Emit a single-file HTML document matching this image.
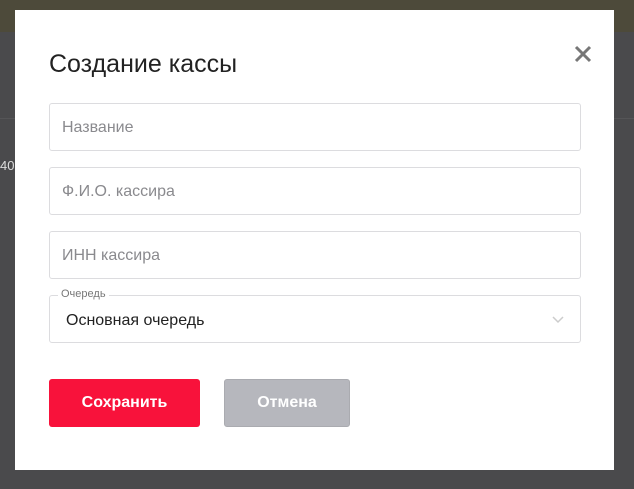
<!DOCTYPE html>
<html><head><meta charset="utf-8"><style>
*{box-sizing:border-box;margin:0;padding:0}
body{width:634px;height:489px;overflow:hidden;background:#4a4a4c;font-family:"Liberation Sans",sans-serif;position:relative}
.top{position:absolute;left:0;top:0;width:634px;height:32px;background:#4d4a3a}
.line{position:absolute;left:0;width:634px;height:1px;background:#555557}
.modal{position:absolute;left:15px;top:10px;width:599px;height:460px;background:#fff}
h1{position:absolute;left:34px;top:40px;font-size:25px;font-weight:normal;color:#222}
.x{position:absolute;left:558px;top:34px;width:20px;height:20px}
.f{position:absolute;left:34px;width:532px;height:48px;border:1px solid #dcdcdf;border-radius:3px;font-size:16px;color:#8a8a8e;padding:15px 12px}
.lbl{position:absolute;left:8px;top:-8px;background:#fff;padding:0 3px;font-size:11px;color:#777}
.btn{position:absolute;top:369px;height:48px;border-radius:3px;color:#fff;font-weight:bold;font-size:16px;text-align:center;line-height:48px}
</style></head><body>
<div class="top"></div>
<div class="line" style="top:118px"></div>
<div style="position:absolute;left:0;top:158px;color:#ddd;font-size:13px">40</div>
<div class="modal">
<h1>Создание кассы</h1>
<svg class="x" viewBox="0 0 20 20"><path d="M3 3L17 17M17 3L3 17" stroke="#777" stroke-width="3"/></svg>
<div class="f" style="top:93px">Название</div>
<div class="f" style="top:157px">Ф.И.О. кассира</div>
<div class="f" style="top:221px">ИНН кассира</div>
<div class="f" style="top:285px;color:#222;padding-top:16px;padding-left:16px"><span class="lbl">Очередь</span>Основная очередь
<svg style="position:absolute;right:16px;top:20px" width="12" height="8" viewBox="0 0 12 8"><path d="M1 1L6 6L11 1" stroke="#ccc" stroke-width="1.5" fill="none"/></svg></div>
<div class="btn" style="left:34px;width:151px;background:#f8123b">Сохранить</div>
<div class="btn" style="left:209px;width:126px;background:#b6b7bd;border:1px solid #aaabb0;line-height:46px">Отмена</div>
</div>
</body></html>
